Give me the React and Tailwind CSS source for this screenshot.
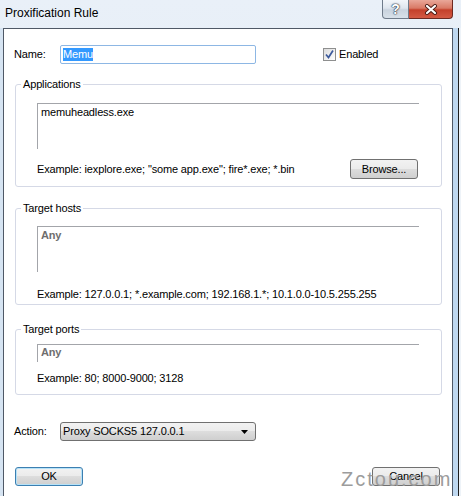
import React from 'react';

const btn =
  'border border-[#707070] rounded-[3px] bg-[linear-gradient(#f2f2f2_0%,#ebebeb_50%,#dddddd_50%,#cfcfcf_100%)] flex items-center justify-center';

const GroupBox = ({ title, children, className = '' }) => (
  <fieldset className={`ml-[11px] w-[427px] border border-[#d5d9e6] rounded-[3px] ${className}`}>
    <legend className="ml-[5px] px-[2px] leading-[13px]">{title}</legend>
    {children}
  </fieldset>
);

const CheckBox = () => (
  <div className="w-[13px] h-[13px] border border-[#8e8f8f] bg-[linear-gradient(135deg,#dcdcdc,#ffffff)] flex items-center justify-center">
    <svg width="11" height="11" viewBox="0 0 11 11">
      <path d="M2 5.5 L4.5 8.5 L9 1.5" fill="none" stroke="#3d5a9c" strokeWidth="1.7" />
    </svg>
  </div>
);

export default function App() {
  return (
    <div className="w-[461px] h-[496px] overflow-hidden flex flex-col bg-[linear-gradient(180deg,#e9f0f8,#dbe7f4)] font-['Liberation_Sans',Arial,sans-serif] text-[11px] tracking-[-0.15px] text-black">
      {/* title bar */}
      <div className="h-[28px] flex shrink-0">
        <div className="pl-[5px] pt-[6px] text-[12px] leading-[14px] tracking-normal">Proxification Rule</div>
        <div className="ml-auto mr-[8px] flex h-[19px]">
          <div className="w-[27px] h-full border border-t-0 border-[#6f7b8a] rounded-bl-[4px] bg-[linear-gradient(#f3f6fa_0%,#dfe6ee_45%,#c9d3de_55%,#d8e1ea_100%)] flex items-center justify-center text-[14px] font-bold text-white [text-shadow:0_0_1px_#2c3646,0_0_1px_#2c3646,0_0_2px_#2c3646]">
            ?
          </div>
          <div className="w-[44px] h-full border border-t-0 border-l-0 border-[#6e2a22] rounded-br-[4px] bg-[linear-gradient(#e9a799_0%,#d97a66_45%,#c4402b_55%,#d45a44_100%)] flex items-center justify-center">
            <svg width="14" height="11" viewBox="0 0 14 11">
              <path d="M3 2 L11 9 M11 2 L3 9" stroke="#4a1a14" strokeWidth="4" strokeLinecap="round" />
              <path d="M3 2 L11 9 M11 2 L3 9" stroke="#ffffff" strokeWidth="2.2" strokeLinecap="round" />
            </svg>
          </div>
        </div>
      </div>

      <div className="flex flex-1 min-h-0">
        <div className="w-[3px] bg-[#d6e4f2]" />
        <div className="flex-1 bg-white border-l border-t border-r border-[#4f5866] flex flex-col">
          {/* name row */}
          <div className="mt-[16px] pl-[10px] flex items-center h-[19px]">
            <div className="w-[46px]">Name:</div>
            <div className="w-[196px] h-[19px] border border-[#8db7e4] rounded-[2px] pl-[2px] flex items-center">
              <span className="bg-[#3399ff] text-white leading-[13px]">Memu</span>
            </div>
            <div className="ml-[67px]">
              <CheckBox />
            </div>
            <div className="ml-[3px]">Enabled</div>
          </div>

          {/* applications */}
          <GroupBox title="Applications" className="mt-[14px] pb-[7px]">
            <div className="ml-[21px] mt-[12px] w-[382px] h-[46px] border-t border-l border-[#a3a5aa] pl-[3px] pt-[2px] leading-[13px]">
              memuheadless.exe
            </div>
            <div className="mt-[10px] ml-[21px] mr-[23px] h-[20px] flex items-center justify-between">
              <span>Example: iexplore.exe; "some app.exe"; fire*.exe; *.bin</span>
              <div className={`${btn} w-[68px] h-[20px]`}>Browse...</div>
            </div>
          </GroupBox>

          {/* target hosts */}
          <GroupBox title="Target hosts" className="mt-[15px] pb-[3px]">
            <div className="ml-[21px] mt-[11px] w-[382px] h-[46px] border-t border-l border-[#a3a5aa] pl-[3px] pt-[2px] leading-[13px] font-bold text-[#6e6e6e]">
              Any
            </div>
            <div className="mt-[16px] ml-[21px] leading-[13px]">
              Example: 127.0.0.1; *.example.com; 192.168.1.*; 10.1.0.0-10.5.255.255
            </div>
          </GroupBox>

          {/* target ports */}
          <GroupBox title="Target ports" className="mt-[18px] pb-[9px]">
            <div className="ml-[21px] mt-[8px] w-[382px] h-[18px] border-t border-l border-[#a3a5aa] pl-[3px] pt-[1px] leading-[13px] font-bold text-[#6e6e6e]">
              Any
            </div>
            <div className="mt-[10px] ml-[21px] leading-[13px]">Example: 80; 8000-9000; 3128</div>
          </GroupBox>

          {/* action */}
          <div className="mt-[27px] pl-[10px] flex items-center h-[19px]">
            <div className="w-[46px]">Action:</div>
            <div className={`${btn} w-[196px] h-[19px] !justify-between pl-[2px] pr-[7px]`}>
              <span>Proxy SOCKS5 127.0.0.1</span>
              <svg width="7" height="4" viewBox="0 0 7 4">
                <path d="M0 0 L7 0 L3.5 4 Z" fill="#000" />
              </svg>
            </div>
          </div>

          {/* buttons */}
          <div className="relative mt-[26px] ml-[11px] mr-[12px] flex justify-between">
            <div className="w-[68px] h-[19px] border border-[#3c7fb1] rounded-[3px] shadow-[inset_0_0_0_1px_#b6e2f8] bg-[linear-gradient(#f2f2f2_0%,#ebebeb_50%,#dddddd_50%,#cfcfcf_100%)] flex items-center justify-center">
              OK
            </div>
            <div className={`${btn} w-[68px] h-[19px]`}>Cancel</div>
            <div className="absolute left-[326px] top-[2px] text-[20px] leading-none tracking-[2px] text-[#9c9c9c]">
              Zctou.com
            </div>
          </div>
        </div>
        <div className="w-[5px] bg-[#bfd8f0]" />
        <div className="w-[1px] bg-[#1e1e1e]" />
        <div className="w-[2px] bg-[#eef3f8]" />
      </div>
    </div>
  );
}
